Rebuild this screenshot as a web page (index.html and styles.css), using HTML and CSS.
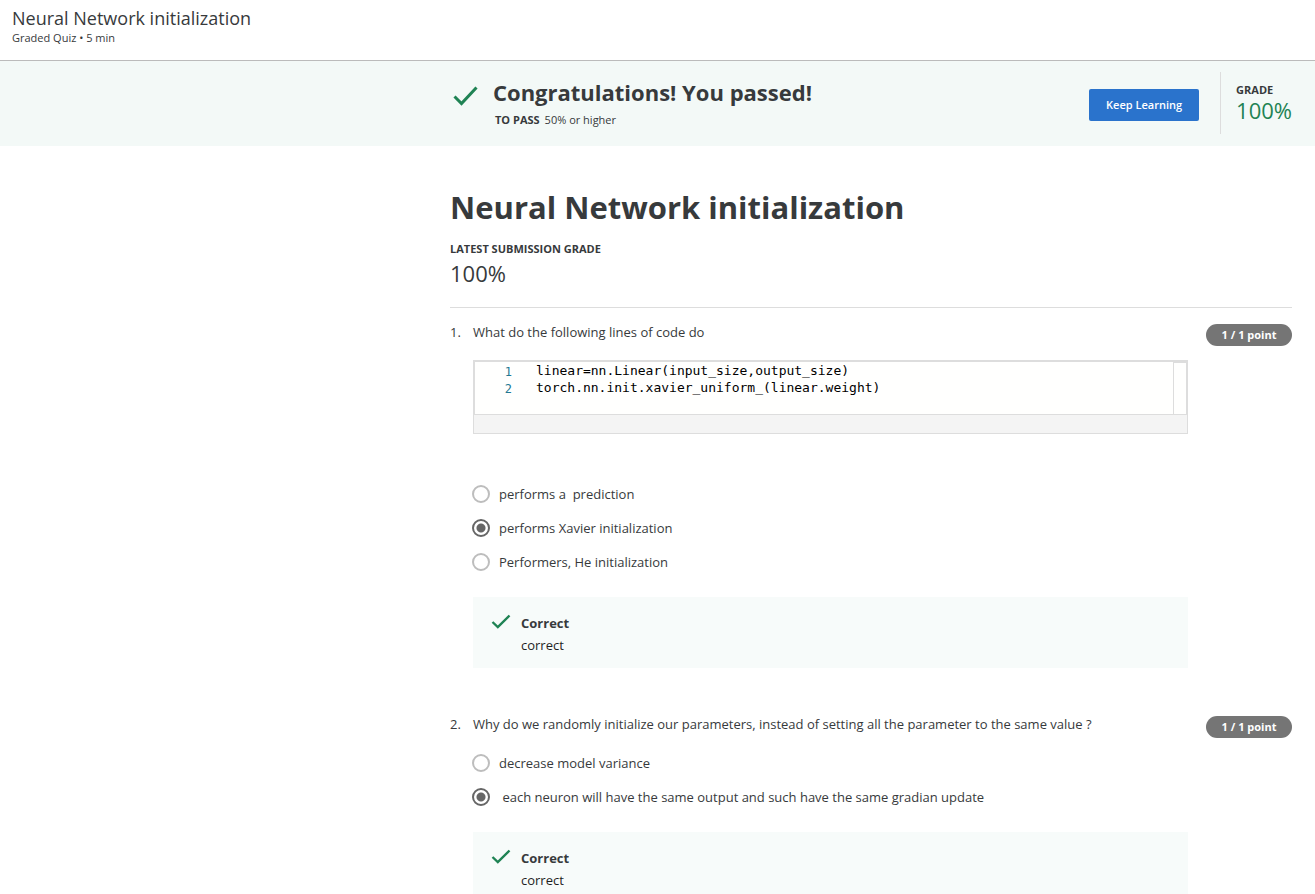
FILE: index.html
```html
<!DOCTYPE html>
<html lang="en">
<head>
<meta charset="utf-8">
<meta name="viewport" content="width=device-width, initial-scale=1">
<title>Neural Network initialization</title>
<link rel="stylesheet" href="styles.css">
</head>
<body>
<header class="topbar">
  <div class="topbar-title">Neural Network initialization</div>
  <div class="topbar-meta">Graded Quiz • 5 min</div>
</header>

<section class="banner">
  <svg class="banner-check" viewBox="0 0 26 20" aria-hidden="true"><path d="M1.5 10.5 L8.5 17.5 L23.5 1.5"/></svg>
  <div class="banner-text">
    <h2 class="banner-title">Congratulations! You passed!</h2>
    <p class="banner-pass"><strong class="caps">TO PASS</strong><span>50% or higher</span></p>
  </div>
  <button class="keep" type="button">Keep Learning</button>
  <div class="grade">
    <div class="caps">GRADE</div>
    <div class="grade-value">100%</div>
  </div>
</section>

<main class="quiz">
  <h1 class="quiz-title">Neural Network initialization</h1>
  <div class="caps">LATEST SUBMISSION GRADE</div>
  <div class="quiz-score">100%</div>

  <section class="question">
    <span class="number">1.</span>
    <div class="body">
      <p class="prompt" id="q1">What do the following lines of code do</p>
      <div class="code">
        <div class="code-view">
          <div class="code-lines">
            <div class="line-numbers"><span>1</span><span>2</span></div>
            <pre class="source">linear=nn.Linear(input_size,output_size)
torch.nn.init.xavier_uniform_(linear.weight)</pre>
          </div>
          <div class="code-ruler"></div>
        </div>
        <div class="code-footer"></div>
      </div>
      <div class="options" role="radiogroup" aria-labelledby="q1">
        <label class="option"><input class="radio" type="radio" name="q1"><span class="option-text">performs a&nbsp; prediction</span></label>
        <label class="option"><input class="radio" type="radio" name="q1" checked><span class="option-text">performs Xavier initialization</span></label>
        <label class="option"><input class="radio" type="radio" name="q1"><span class="option-text">Performers, He initialization</span></label>
      </div>
      <div class="feedback">
        <svg class="feedback-check" viewBox="0 0 20 16" aria-hidden="true"><path d="M1.5 8 L6.8 13 L18.5 1.5"/></svg>
        <div>
          <div class="feedback-title">Correct</div>
          <div class="feedback-text">correct</div>
        </div>
      </div>
    </div>
    <span class="points">1 / 1 point</span>
  </section>

  <section class="question">
    <span class="number">2.</span>
    <div class="body">
      <p class="prompt" id="q2">Why do we randomly initialize our parameters, instead of setting all the parameter to the same value ?</p>
      <div class="options" role="radiogroup" aria-labelledby="q2">
        <label class="option"><input class="radio" type="radio" name="q2"><span class="option-text">decrease model variance</span></label>
        <label class="option"><input class="radio" type="radio" name="q2" checked><span class="option-text">&nbsp;each neuron will have the same output and such have the same gradian update</span></label>
      </div>
      <div class="feedback">
        <svg class="feedback-check" viewBox="0 0 20 16" aria-hidden="true"><path d="M1.5 8 L6.8 13 L18.5 1.5"/></svg>
        <div>
          <div class="feedback-title">Correct</div>
          <div class="feedback-text">correct</div>
        </div>
      </div>
    </div>
    <span class="points">1 / 1 point</span>
  </section>
</main>
</body>
</html>
```
FILE: styles.css
```css
* {
  box-sizing: border-box;
}

html {
  scrollbar-width: none;
}

body {
  margin: 0;
  background: #fff;
  color: #373a3c;
  font-family: "Open Sans", "Noto Sans", sans-serif;
  font-size: 13px;
  line-height: 20px;
}

h1, h2, p, pre {
  margin: 0;
}

.topbar {
  padding: 7px 12px 13px;
  border-bottom: 1px solid #bbb;
}

.topbar-title {
  font-size: 18px;
  line-height: 22px;
}

.topbar-meta {
  font-size: 11px;
  line-height: 18px;
}

.banner {
  display: flex;
  align-items: flex-start;
  padding: 11px 23px 12px 453px;
  background: #f3f9f7;
}

.banner-check {
  flex: none;
  width: 26px;
  height: 20px;
  margin: 14px 14px 0 0;
  fill: none;
  stroke: #1f8354;
  stroke-width: 3;
}

.banner-text {
  flex: 1;
}

.banner-title {
  margin-top: 5px;
  font-size: 22px;
  line-height: 30px;
}

.banner-pass {
  display: flex;
  gap: 5px;
  margin-top: 5px;
  padding-left: 2px;
  font-size: 11px;
  line-height: 16px;
}

.caps {
  font-size: 11px;
  font-weight: 700;
  line-height: 16px;
}

.keep {
  height: 32px;
  margin: 17px 21px 0 0;
  padding: 0 17px 1px;
  border: 0;
  border-radius: 2px;
  background: #2a73cc;
  color: #fff;
  font: 600 11px "Open Sans", "Noto Sans", sans-serif;
}

.grade {
  height: 62px;
  padding: 10px 0 0 15px;
  border-left: 1px solid #ddd;
}

.grade-value {
  color: #1f8354;
  font-size: 22px;
  line-height: 24px;
}

.quiz {
  padding: 38px 23px 24px 450px;
}

.quiz-title {
  margin-bottom: 11px;
  font-size: 31px;
  line-height: 46px;
}

.quiz-score {
  margin-bottom: 14px;
  padding: 1px 0 19px;
  border-bottom: 1px solid #ddd;
  font-size: 22px;
  line-height: 30px;
}

.question {
  display: grid;
  grid-template-columns: 23px 1fr 86px;
  align-items: start;
  margin-bottom: 46px;
}

.body {
  margin-right: 18px;
}

.code {
  margin: 18px 0 43px;
  border: 1px solid #ddd;
}

.code-view {
  display: flex;
  height: 54px;
  border: 1px solid #ddd;
  background: #fffffe;
}

.code-lines {
  display: flex;
  flex: 1;
  gap: 24px;
  font-family: "DejaVu Sans Mono", "Liberation Mono", monospace;
  font-size: 13px;
  line-height: 17px;
}

.line-numbers {
  display: grid;
  width: 37px;
  padding-top: 2px;
  align-content: start;
  justify-items: end;
  color: #237893;
  font-size: 12px;
}

.source {
  font: inherit;
  color: #000;
}

.code-ruler {
  width: 13px;
  border-left: 1px solid #ddd;
  border-top: 1px solid #ddd;
}

.code-footer {
  height: 18px;
  background: #f4f4f4;
}

.options {
  margin-top: 12px;
}

.option {
  display: flex;
  align-items: center;
  gap: 9px;
  margin-left: -1px;
  padding: 7px 0;
}

.radio {
  appearance: none;
  width: 18px;
  height: 18px;
  margin: 0;
  border: 2px solid #bdbdbd;
  border-radius: 50%;
  background: #fff;
}

.radio:checked {
  border-color: #666;
  background: radial-gradient(circle, #666 4px, transparent 5px);
}

.feedback {
  display: flex;
  gap: 10px;
  margin-top: 18px;
  padding: 15px 18px 12px;
  background: #f7fbfa;
  line-height: 22px;
}

.feedback-check {
  width: 20px;
  height: 16px;
  margin-top: 2px;
  fill: none;
  stroke: #1f8354;
  stroke-width: 2.4;
}

.feedback-title {
  font-weight: 700;
}

.feedback-text {
  color: #1f1f1f;
}

.points {
  margin-top: 2px;
  border-radius: 11px;
  background: #757575;
  color: #fff;
  font-size: 11px;
  font-weight: 700;
  line-height: 22px;
  text-align: center;
}
```
